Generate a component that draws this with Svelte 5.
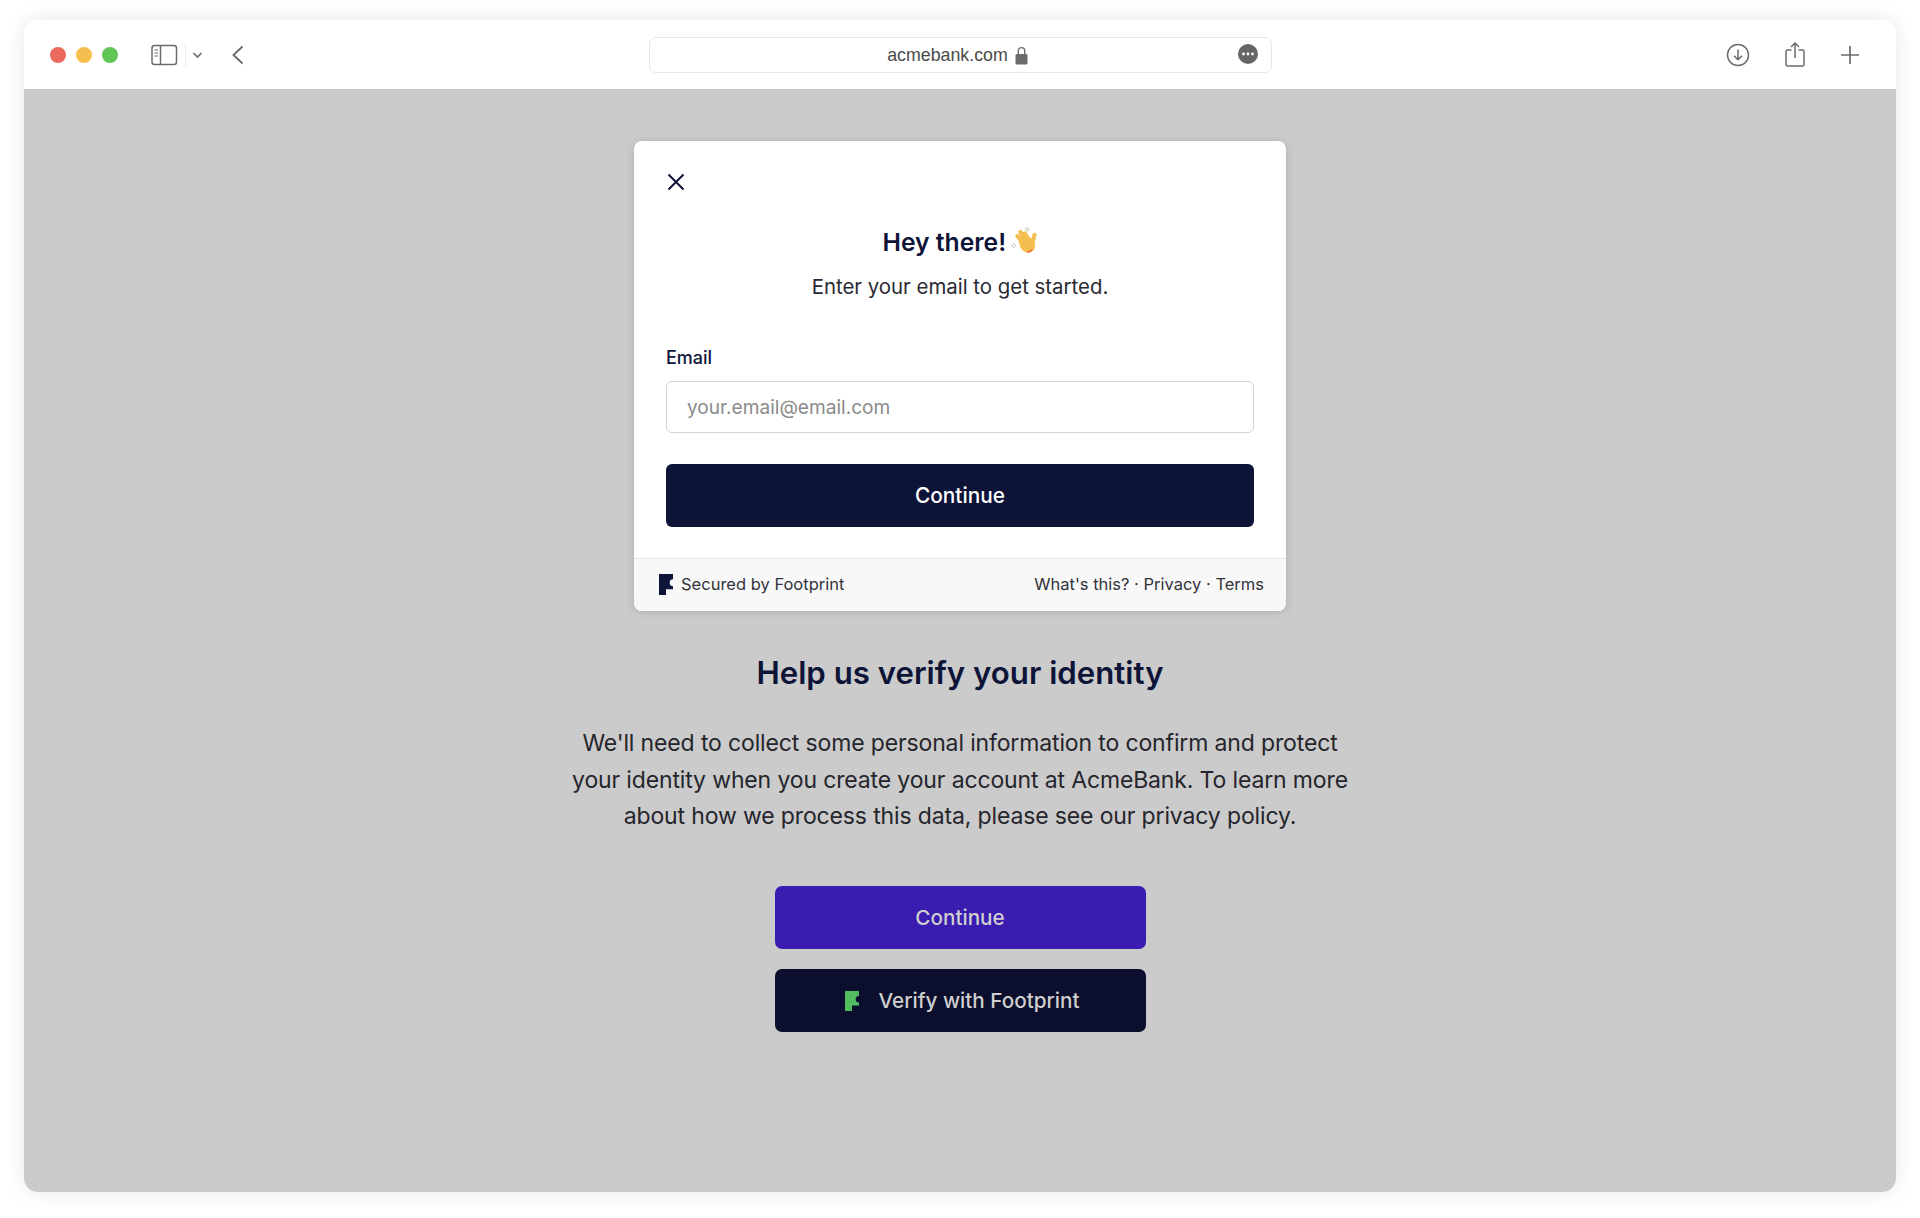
<script>
  const paragraph = [
    "We'll need to collect some personal information to confirm and protect",
    'your identity when you create your account at AcmeBank. To learn more',
    'about how we process this data, please see our privacy policy.'
  ];
</script>

<div class="window">
  <header class="toolbar">
    <div class="left">
      <span class="dot red"></span>
      <span class="dot yellow"></span>
      <span class="dot green"></span>
      <svg class="sidebar" width="27" height="22" viewBox="0 0 27 22" fill="none" stroke="#6b6b6b" stroke-width="1.5">
        <rect x="1" y="1.5" width="24.5" height="19" rx="2.5" />
        <path d="M9.5 1.5v19" />
        <path d="M3.5 6h3.5M3.5 9h3.5M3.5 12h3.5" stroke-width="1.2" />
      </svg>
      <span class="divider"></span>
      <svg class="chevron" width="11" height="8" viewBox="0 0 11 8" fill="none" stroke="#6b6b6b" stroke-width="1.6">
        <path d="M1.5 2l4 4 4-4" />
      </svg>
      <svg class="back" width="14" height="20" viewBox="0 0 14 20" fill="none" stroke="#6b6b6b" stroke-width="1.9">
        <path d="M11.5 1.5L2.5 10l9 8.5" />
      </svg>
    </div>
    <div class="url">
      <span class="host">acmebank.com</span>
      <svg class="lock" width="13" height="19" viewBox="0 0 13 19">
        <path d="M3.3 8.500V4.800a3.200 3.200 0 0 1 6.400 0V8.500" fill="none" stroke="#6b6b6b" stroke-width="1.4" />
        <rect x="0.500" y="8" width="12" height="10.500" rx="1.500" fill="#6b6b6b" />
      </svg>
      <svg class="more" width="20" height="20" viewBox="0 0 20 20">
        <circle cx="10" cy="10" r="10" fill="#666" />
        <circle cx="5.5" cy="10" r="1.4" fill="#fff" />
        <circle cx="10" cy="10" r="1.4" fill="#fff" />
        <circle cx="14.5" cy="10" r="1.4" fill="#fff" />
      </svg>
    </div>
    <div class="right">
      <svg width="24" height="24" viewBox="0 0 24 24" fill="none" stroke="#6b6b6b" stroke-width="1.5">
        <circle cx="12" cy="12" r="10.5" />
        <path d="M12 6.5v10M8 12.8l4 4 4-4" />
      </svg>
      <svg width="22" height="26" viewBox="0 0 22 26" fill="none" stroke="#6b6b6b" stroke-width="1.5">
        <path d="M7.500 8H3.500A1.500 1.500 0 0 0 2 9.500v13A1.500 1.500 0 0 0 3.500 24h15a1.500 1.500 0 0 0 1.500-1.500v-13A1.500 1.500 0 0 0 18.500 8h-4" />
        <path d="M11 16V1M7 5l4-4 4 4" />
      </svg>
      <svg width="20" height="20" viewBox="0 0 20 20" fill="none" stroke="#6b6b6b" stroke-width="1.7">
        <path d="M10 1v18M1 10h18" />
      </svg>
    </div>
  </header>

  <main class="page">
    <section class="card">
      <div class="card-body">
        <svg class="close" width="18" height="18" viewBox="0 0 18 18" fill="none" stroke="#0e1438" stroke-width="2">
          <path d="M1.500 1.500l15 15M16.500 1.500l-15 15" />
        </svg>
        <h2>Hey there!
          <svg class="wave" width="32" height="32" viewBox="0 0 32 32">
            <path d="M3.500 19.500l2.500 3.500M5.500 18l2.500 3.500M17 3l2.500 3.500M19 2l2.500 3.500" stroke="#b0b0b0" stroke-width="1" fill="none" />
            <path d="M9.500 11l7 7M12.500 7l6.500 9M17 8.500l4.500 8M26.500 10l-1.800 7" stroke="#f5bf50" stroke-width="4.200" stroke-linecap="round" fill="none" />
            <path d="M9.500 13l7-5 10 8 .5 5c0 4-3.500 7-8 6.500-3-.3-5-2.500-6.500-5z" fill="#f5bf50" />
            <path d="M19 27c2 .3 4-.5 5.500-2.500" stroke="#e8683f" stroke-width="1.300" fill="none" />
          </svg>
        </h2>
        <p class="sub">Enter your email to get started.</p>
        <label class="label" for="email">Email</label>
        <input id="email" class="input" type="text" placeholder="your.email@email.com" />
        <button class="btn-card">Continue</button>
      </div>
      <footer class="card-foot">
        <span class="secured">
          <svg width="14" height="21" viewBox="0 0 14 20" preserveAspectRatio="none">
            <path d="M0 0H14V5A3.300 3.300 0 1 0 14 11.600V14.500H7V20H0Z" fill="#0e1438" />
          </svg>
          Secured by Footprint
        </span>
        <span class="links">What's this? · Privacy · Terms</span>
      </footer>
    </section>

    <h1>Help us verify your identity</h1>
    <div class="copy">
      {#each paragraph as line}
        <p>{line}</p>
      {/each}
    </div>
    <button class="btn btn-purple">Continue</button>
    <button class="btn btn-dark">
      <svg width="14" height="20" viewBox="0 0 14 20">
        <path d="M0 0H14V5A3.300 3.300 0 1 0 14 11.600V14.500H7V20H0Z" fill="#52bd5f" />
      </svg>
      Verify with Footprint
    </button>
  </main>
</div>

<style>
  :global(body) {
    background: #fff;
  }

  .window {
    height: 1172px;
    margin: 20px 24px 26px;
    border-radius: 14px;
    overflow: hidden;
    display: flex;
    flex-direction: column;
    box-shadow: 0 0 20px rgba(0, 0, 0, 0.1);
    font-family: Inter, "Liberation Sans", sans-serif;
  }

  .toolbar {
    height: 69px;
    flex: none;
    background: #fff;
    display: grid;
    grid-template-columns: 1fr 623px 1fr;
    align-items: center;
  }

  .left {
    display: flex;
    align-items: center;
    padding-left: 26px;
    padding-top: 1px;
  }

  .dot {
    width: 16px;
    height: 16px;
    border-radius: 50%;
    margin-right: 10px;
  }

  .red { background: #ec6a5e; }
  .yellow { background: #f5bf4f; }
  .green { background: #61c554; }

  .sidebar { margin-left: 23px; }

  .divider {
    width: 1px;
    height: 24px;
    margin-left: 7px;
    background: #eee;
  }

  .chevron { margin-left: 6px; }
  .back { margin-left: 28px; }

  .url {
    height: 36px;
    border: 1.5px solid #e6e6e6;
    border-radius: 7px;
    box-sizing: border-box;
    padding-right: 5px;
    position: relative;
    display: flex;
    align-items: center;
    justify-content: center;
    gap: 7px;
    margin-top: 1px;
    color: #4a4a4a;
  }

  .host {
    font-family: "Liberation Sans", sans-serif;
    font-size: 17.800px;
  }

  .more {
    position: absolute;
    right: 13px;
    top: 6px;
  }

  .right {
    display: flex;
    justify-content: flex-end;
    align-items: center;
    gap: 34px;
    padding-right: 36px;
    padding-top: 1px;
  }

  .page {
    flex: 1;
    background: #cbcbcb;
    display: flex;
    flex-direction: column;
    align-items: center;
  }

  .card {
    width: 652px;
    margin-top: 52px;
    background: #fff;
    border-radius: 8px;
    overflow: hidden;
    box-shadow: 0 1px 8px rgba(0, 0, 0, 0.14);
  }

  .card-body {
    padding: 32px 32px 31px;
    display: flex;
    flex-direction: column;
  }

  .close {
    margin-left: 1px;
  }

  h2 {
    margin: 34px 0 0;
    height: 32px;
    text-align: center;
    font-size: 24.700px;
    line-height: 32px;
    font-weight: 600;
    color: #0e1438;
  }

  .wave {
    vertical-align: -6px;
    margin-left: -4.400px;
    margin-right: -2.400px;
  }

  .sub {
    margin: 16px 0 0;
    text-align: center;
    font-size: 20.400px;
    line-height: 28px;
    color: #2a2a33;
  }

  .label {
    margin-top: 45px;
    font-size: 18px;
    line-height: 24px;
    font-weight: 500;
    color: #0e1438;
  }

  .input {
    margin-top: 11px;
    height: 52px;
    box-sizing: border-box;
    border: 1.500px solid #d4d4d4;
    border-radius: 6px;
    padding: 0 20px;
    font: 400 19.100px Inter, sans-serif;
    color: #2a2a33;
  }

  .input::placeholder {
    color: #8a8a8a;
  }

  .btn-card {
    margin-top: 31px;
    height: 63px;
    border: 0;
    border-radius: 6px;
    background: #0e1438;
    color: #fff;
    font: 500 20.800px Inter, sans-serif;
  }

  .card-foot {
    height: 53px;
    box-sizing: border-box;
    border-top: 1px solid #e8e8e8;
    background: #f8f8f8;
    padding: 0 22px 2px 25px;
    display: flex;
    align-items: center;
    justify-content: space-between;
    font-size: 16.500px;
    color: #33333b;
  }

  .secured {
    display: flex;
    align-items: center;
    gap: 8px;
  }

  h1 {
    margin: 43px 0 0;
    font-size: 31.200px;
    line-height: 38px;
    font-weight: 600;
    color: #0e1438;
  }

  .copy {
    margin-top: 33px;
    margin-bottom: 51px;
    text-align: center;
    font-size: 23px;
    letter-spacing: -0.140px;
    line-height: 36.500px;
    color: #25252c;
  }

  .copy p {
    margin: 0;
  }

  .btn {
    width: 371px;
    height: 63px;
    border: 0;
    border-radius: 7px;
    font: 500 20.700px Inter, sans-serif;
    color: #cfcfcf;
    display: flex;
    align-items: center;
    justify-content: center;
    gap: 19px;
  }

  .btn-purple {
    background: #3b1cb0;
  }

  .btn-dark {
    margin-top: 20.500px;
    padding-left: 11px;
    background: #0b0e2c;
  }
</style>
